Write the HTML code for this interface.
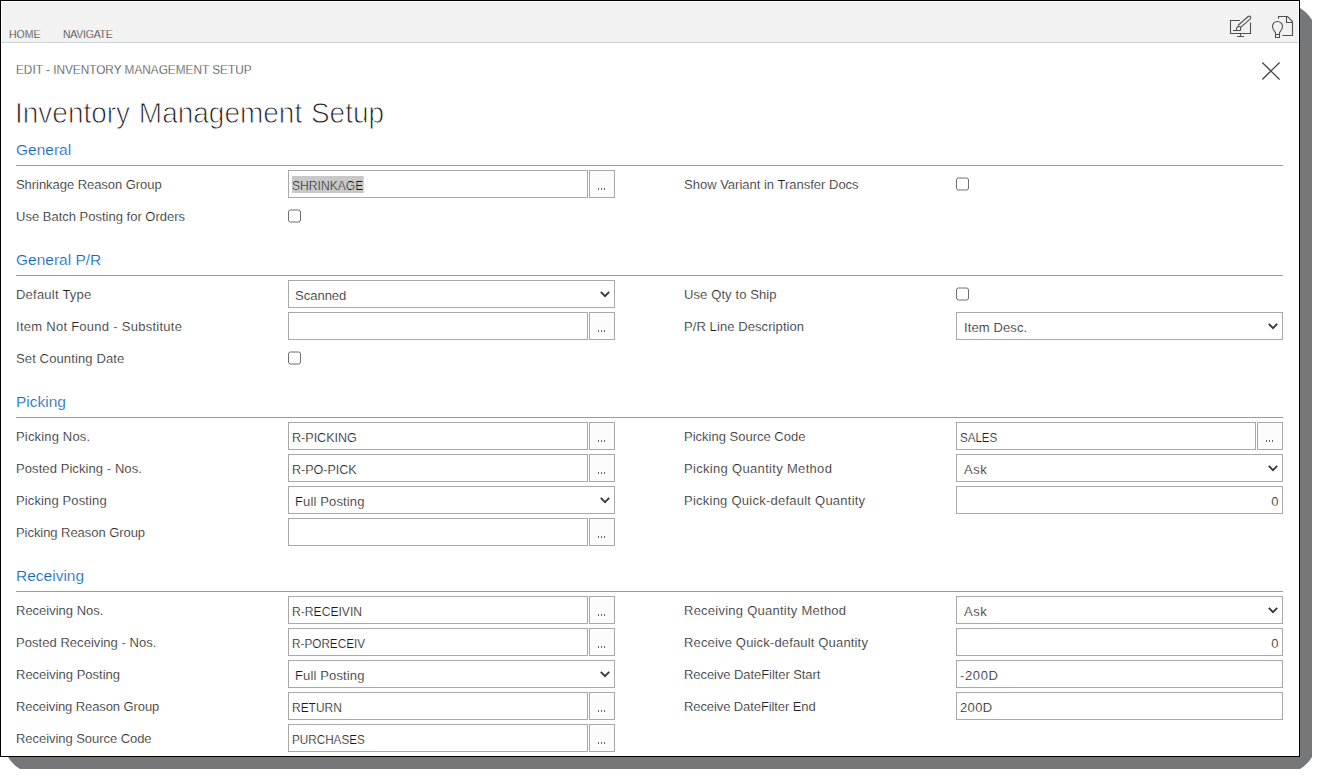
<!DOCTYPE html>
<html><head><meta charset="utf-8"><style>
html,body{margin:0;padding:0;background:#fff;width:1320px;height:777px;overflow:hidden;font-family:"Liberation Sans",sans-serif;}
.shadow{position:absolute;left:0;top:0;}
.win{position:absolute;left:0;top:0;width:1300px;height:757px;background:#fff;overflow:hidden;}
.frame{position:absolute;left:0;top:0;width:1298px;height:755px;border:1px solid #000;}
.tabbar{position:absolute;left:2px;top:2px;width:1296px;height:40px;background:#f2f2f2;}
.tabsep{position:absolute;left:1px;top:42px;width:1298px;height:1px;background:#cdd5dd;}
.tab{position:absolute;top:28px;font-size:10.5px;color:#222;line-height:13px;-webkit-text-stroke:0.25px #f2f2f2;}
.crumb{position:absolute;left:16px;top:63px;font-size:12.4px;color:#2a2a2a;-webkit-text-stroke:0.3px #fff;line-height:15px;transform:scaleX(0.952);transform-origin:0 0;}
.title{position:absolute;left:15px;top:95px;font-size:29px;color:#1a1a1a;-webkit-text-stroke:0.9px #fff;transform:scaleX(0.965);transform-origin:0 0;line-height:36px;word-spacing:1px;}
.sec{position:absolute;left:16px;font-size:15.5px;color:#0f67c2;line-height:20px;-webkit-text-stroke:0.2px #fff;}
.sep{position:absolute;left:16px;width:1267px;height:1px;background:#9b9b9b;}
.lbl{position:absolute;font-size:13px;color:#222;line-height:28px;white-space:nowrap;margin-top:1px;-webkit-text-stroke:0.2px #fff;}
.inp{position:absolute;width:298px;height:26px;border:1px solid #a9a9a9;background:#fff;font-size:13px;color:#1a1a1a;line-height:28px;box-sizing:content-box;}
.inp span{position:absolute;left:3px;top:1px;right:3.5px;-webkit-text-stroke:0.2px #fff;}
.inp.sel span{left:7px;}
.inp.wide{width:325px;}
.inp .hl{background:#c8c8c8;top:5px;right:auto;padding-top:2px;height:15px;line-height:15px;padding-right:0;}
.btn{position:absolute;width:24px;height:26px;border:1px solid #a9a9a9;background:#fcfcfc;}
.btn i{position:absolute;top:17px;width:1.3px;height:2px;background:#666;}
.btn i:nth-child(1){left:8px} .btn i:nth-child(2){left:11px} .btn i:nth-child(3){left:14px}
.chev{position:absolute;right:4px;top:10px;}
.cb{position:absolute;}
.ico{position:absolute;}
</style></head><body>
<svg class="shadow" width="1320" height="777" viewBox="0 0 1320 777"><path d="M8 8 H1300 Q1307.5 12.5 1312 20 V757 Q1307.5 764.5 1300 769 H20 Q12.5 764.5 8 757 Z" fill="#767779"/></svg>
<div class="win">
<div class="tabbar"></div>
<div class="tabsep"></div>
<div class="frame"></div>
<div class="tab" style="left:9px">HOME</div>
<div class="tab" style="left:63px;letter-spacing:-0.25px">NAVIGATE</div>

<svg class="ico" style="left:1226px;top:12px" width="30" height="28" viewBox="0 0 30 28">
 <g fill="none" stroke="#505050" stroke-width="1.1">
  <path d="M13.9 8.5 H4.5 V21.5 H24.5 V10.4"/>
  <path d="M14.5 21.5 V24.5 M11 24.5 H18"/>
  <path d="M11.9 13.5 L22.2 4.5 A1.6 1.6 0 0 1 24.3 6.9 L14.4 15.6"/>
  <path d="M10.5 18.5 V16.4 A2.5 2.5 0 0 1 14.6 15.2 L14.5 18.5"/>
  <path d="M7 18.5 H14.7"/>
 </g>
</svg>
<svg class="ico" style="left:1266px;top:12px" width="32" height="28" viewBox="0 0 32 28">
 <g fill="none" stroke="#505050" stroke-width="1.1">
  <path d="M12.5 6.7 V4.5 H21.5 L26.5 9.5 V23.5 H16.2"/>
  <path d="M20.5 4.5 V10.5 H26.5"/>
  <path d="M9.5 22.5 V21 C9.5 19.5 6.5 18 6.5 14.5 A5 5 0 0 1 16.5 14.5 C16.5 18 13.5 19.5 13.5 21 V22.5 Z"/>
  <path d="M9.5 22.5 V25.5 H13.5 V22.5"/>
 </g>
</svg>
<svg class="ico" style="left:1258px;top:58px" width="26" height="26" viewBox="0 0 26 26">
 <path d="M4.3 4.5 L21.6 21.5 M21.6 4.5 L4.3 21.5" fill="none" stroke="#484848" stroke-width="1.3"/>
</svg>

<div class="crumb">EDIT - INVENTORY MANAGEMENT SETUP</div>
<div class="title">Inventory Management Setup</div>
<div class="sec" style="top:140px">General</div><div class="sep" style="top:165px"></div>
<div class="lbl" style="left:16px;top:170px;letter-spacing:-0.048px">Shrinkage Reason Group</div><div class="inp" style="left:288px;top:170px"><span class="hl" style="transform:scaleX(0.932);transform-origin:0 0">SHRINKAGE</span></div><div class="btn" style="left:589px;top:170px"><i></i><i></i><i></i></div>
<div class="lbl" style="left:684px;top:170px">Show Variant in Transfer Docs</div><svg class="cb" style="left:956px;top:177px" width="14" height="15" viewBox="0 0 14 15"><rect x="0.5" y="1" width="12" height="12" rx="2" fill="#fff" stroke="#6e6e6e" stroke-width="1"/></svg>
<div class="lbl" style="left:16px;top:202px">Use Batch Posting for Orders</div><svg class="cb" style="left:288px;top:209px" width="14" height="15" viewBox="0 0 14 15"><rect x="0.5" y="1" width="12" height="12" rx="2" fill="#fff" stroke="#6e6e6e" stroke-width="1"/></svg>
<div class="sec" style="top:250px">General P/R</div><div class="sep" style="top:275px"></div>
<div class="lbl" style="left:16px;top:280px;letter-spacing:0.227px">Default Type</div><div class="inp wide sel" style="left:288px;top:280px"><span style="left:6px;">Scanned</span><svg class="chev" width="12" height="8" viewBox="0 0 12 8"><path d="M2.8 0.8 L7 5.1 L11.2 0.8" fill="none" stroke="#3a3a3a" stroke-width="1.9"/></svg></div>
<div class="lbl" style="left:684px;top:280px;letter-spacing:0.107px">Use Qty to Ship</div><svg class="cb" style="left:956px;top:287px" width="14" height="15" viewBox="0 0 14 15"><rect x="0.5" y="1" width="12" height="12" rx="2" fill="#fff" stroke="#6e6e6e" stroke-width="1"/></svg>
<div class="lbl" style="left:16px;top:312px;letter-spacing:0.269px">Item Not Found - Substitute</div><div class="inp" style="left:288px;top:312px"><span></span></div><div class="btn" style="left:589px;top:312px"><i></i><i></i><i></i></div>
<div class="lbl" style="left:684px;top:312px;letter-spacing:0.084px">P/R Line Description</div><div class="inp wide sel" style="left:956px;top:312px"><span style="letter-spacing:0.11px;">Item Desc.</span><svg class="chev" width="12" height="8" viewBox="0 0 12 8"><path d="M2.8 0.8 L7 5.1 L11.2 0.8" fill="none" stroke="#3a3a3a" stroke-width="1.9"/></svg></div>
<div class="lbl" style="left:16px;top:344px;letter-spacing:0.125px">Set Counting Date</div><svg class="cb" style="left:288px;top:351px" width="14" height="15" viewBox="0 0 14 15"><rect x="0.5" y="1" width="12" height="12" rx="2" fill="#fff" stroke="#6e6e6e" stroke-width="1"/></svg>
<div class="sec" style="top:392px">Picking</div><div class="sep" style="top:417px"></div>
<div class="lbl" style="left:16px;top:422px;letter-spacing:0.164px">Picking Nos.</div><div class="inp" style="left:288px;top:422px"><span style="transform:scaleX(0.966);transform-origin:0 0">R-PICKING</span></div><div class="btn" style="left:589px;top:422px"><i></i><i></i><i></i></div>
<div class="lbl" style="left:684px;top:422px">Picking Source Code</div><div class="inp" style="left:956px;top:422px"><span style="transform:scaleX(0.89);transform-origin:0 0">SALES</span></div><div class="btn" style="left:1257px;top:422px"><i></i><i></i><i></i></div>
<div class="lbl" style="left:16px;top:454px;letter-spacing:0.080px">Posted Picking - Nos.</div><div class="inp" style="left:288px;top:454px"><span style="transform:scaleX(0.963);transform-origin:0 0">R-PO-PICK</span></div><div class="btn" style="left:589px;top:454px"><i></i><i></i><i></i></div>
<div class="lbl" style="left:684px;top:454px;letter-spacing:0.318px">Picking Quantity Method</div><div class="inp wide sel" style="left:956px;top:454px"><span style="letter-spacing:0.5px;">Ask</span><svg class="chev" width="12" height="8" viewBox="0 0 12 8"><path d="M2.8 0.8 L7 5.1 L11.2 0.8" fill="none" stroke="#3a3a3a" stroke-width="1.9"/></svg></div>
<div class="lbl" style="left:16px;top:486px;letter-spacing:0.129px">Picking Posting</div><div class="inp wide sel" style="left:288px;top:486px"><span style="letter-spacing:0.14px;left:6px;">Full Posting</span><svg class="chev" width="12" height="8" viewBox="0 0 12 8"><path d="M2.8 0.8 L7 5.1 L11.2 0.8" fill="none" stroke="#3a3a3a" stroke-width="1.9"/></svg></div>
<div class="lbl" style="left:684px;top:486px;letter-spacing:0.241px">Picking Quick-default Quantity</div><div class="inp wide" style="left:956px;top:486px;text-align:right"><span>0</span></div>
<div class="lbl" style="left:16px;top:518px;letter-spacing:-0.053px">Picking Reason Group</div><div class="inp" style="left:288px;top:518px"><span></span></div><div class="btn" style="left:589px;top:518px"><i></i><i></i><i></i></div>
<div class="sec" style="top:566px">Receiving</div><div class="sep" style="top:591px"></div>
<div class="lbl" style="left:16px;top:596px">Receiving Nos.</div><div class="inp" style="left:288px;top:596px"><span style="transform:scaleX(0.933);transform-origin:0 0">R-RECEIVIN</span></div><div class="btn" style="left:589px;top:596px"><i></i><i></i><i></i></div>
<div class="lbl" style="left:684px;top:596px;letter-spacing:0.250px">Receiving Quantity Method</div><div class="inp wide sel" style="left:956px;top:596px"><span style="letter-spacing:0.5px;">Ask</span><svg class="chev" width="12" height="8" viewBox="0 0 12 8"><path d="M2.8 0.8 L7 5.1 L11.2 0.8" fill="none" stroke="#3a3a3a" stroke-width="1.9"/></svg></div>
<div class="lbl" style="left:16px;top:628px;letter-spacing:0.045px">Posted Receiving - Nos.</div><div class="inp" style="left:288px;top:628px"><span style="transform:scaleX(0.904);transform-origin:0 0">R-PORECEIV</span></div><div class="btn" style="left:589px;top:628px"><i></i><i></i><i></i></div>
<div class="lbl" style="left:684px;top:628px;letter-spacing:0.162px">Receive Quick-default Quantity</div><div class="inp wide" style="left:956px;top:628px;text-align:right"><span>0</span></div>
<div class="lbl" style="left:16px;top:660px">Receiving Posting</div><div class="inp wide sel" style="left:288px;top:660px"><span style="letter-spacing:0.14px;left:6px;">Full Posting</span><svg class="chev" width="12" height="8" viewBox="0 0 12 8"><path d="M2.8 0.8 L7 5.1 L11.2 0.8" fill="none" stroke="#3a3a3a" stroke-width="1.9"/></svg></div>
<div class="lbl" style="left:684px;top:660px;letter-spacing:-0.070px">Receive DateFilter Start</div><div class="inp wide" style="left:956px;top:660px;text-align:left"><span style="letter-spacing:0.62px">-200D</span></div>
<div class="lbl" style="left:16px;top:692px;letter-spacing:-0.095px">Receiving Reason Group</div><div class="inp" style="left:288px;top:692px"><span style="transform:scaleX(0.92);transform-origin:0 0">RETURN</span></div><div class="btn" style="left:589px;top:692px"><i></i><i></i><i></i></div>
<div class="lbl" style="left:684px;top:692px;letter-spacing:-0.095px">Receive DateFilter End</div><div class="inp wide" style="left:956px;top:692px;text-align:left"><span style="letter-spacing:0.37px">200D</span></div>
<div class="lbl" style="left:16px;top:724px;letter-spacing:-0.050px">Receiving Source Code</div><div class="inp" style="left:288px;top:724px"><span style="transform:scaleX(0.9);transform-origin:0 0">PURCHASES</span></div><div class="btn" style="left:589px;top:724px"><i></i><i></i><i></i></div>
</div>
</body></html>
